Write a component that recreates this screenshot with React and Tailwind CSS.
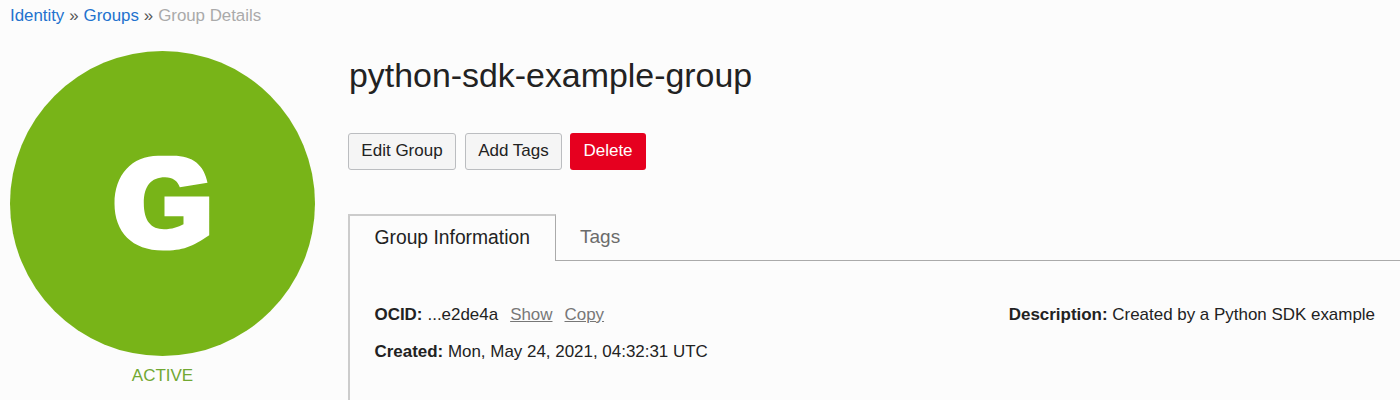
export default function App() {
  return (
    <div className="h-[400px] w-[1400px] overflow-hidden bg-[#fcfcfc] font-['Liberation_Sans',Arial,sans-serif] text-[#222]">
      <nav className="flex h-[51px] gap-[5px] pt-[6px] pl-[10px] text-[16.9px] leading-[20px] tracking-[-0.03px]">
        <a className="text-[#2272ce]">Identity</a>
        <span className="text-[#555]">»</span>
        <a className="text-[#2272ce]">Groups</a>
        <span className="text-[#555]">»</span>
        <span className="text-[#aaa]">Group Details</span>
      </nav>
      <div className="flex">
        <aside className="w-[348px] shrink-0 pl-[10px]">
          <div className="flex size-[305px] items-center justify-center rounded-full bg-[#78b418]">
            <svg className="overflow-visible" width="96" height="96" viewBox="0 0 96 96">
              <path d="M49.5 40.5H94.2V79.2C77 91 68 94.5 48 94.5C17 94.5 -0.5 76 -0.5 47.5C-0.5 19 17 -0.2 43 -0.2H58C78 -0.2 89 9 92.5 26.8L64.8 31.2C62.5 25 58 21.2 50 21.2C36 21.2 28.8 30 28.8 47C28.8 65 36 73.2 49 73.2C57 73.2 63 71 68.5 68.2V60.2H49.5Z" fill="white" />
            </svg>
          </div>
          <div className="w-[305px] pt-[10px] text-center text-[17px] leading-[20px] text-[#71a832]">ACTIVE</div>
        </aside>
        <main className="flex-1">
          <h1 className="h-[82px] pt-[4px] pl-px text-[33.9px] leading-[40px]">python-sdk-example-group</h1>
          <div className="flex h-[81px] items-start text-[17px] leading-[20px]">
            <button className="mr-[9px] h-[37px] w-[108px] rounded-[3px] border border-[#bbbdc0] bg-[#f5f5f5] pb-[2px]">Edit Group</button>
            <button className="mr-[8px] h-[37px] w-[97px] rounded-[3px] border border-[#bbbdc0] bg-[#f5f5f5] pb-[2px]">Add Tags</button>
            <button className="h-[37px] w-[76px] rounded-[3px] bg-[#e6001f] pb-[2px] text-white">Delete</button>
          </div>
          <div className="flex h-[47px] text-[19px]">
            <div className="flex w-[208px] items-center border-t-2 border-r border-l-2 border-t-[#ccc] border-r-[#aaa] border-l-[#ccc] pl-[24.5px] text-[19.3px]">Group Information</div>
            <div className="flex flex-1 items-center border-b border-[#aaa] pl-[24px] text-[#6b6b6b]">Tags</div>
          </div>
          <section className="flex h-[139px] justify-between border-l-2 border-[#ccc] pt-[44px] pr-[25px] pl-[24.5px] text-[16.95px] leading-[20px]">
            <div>
              <div className="flex h-[37px]"><b>OCID:</b><span className="ml-[5px]">...e2de4a</span><a className="ml-[12px] text-[#777] underline">Show</a><a className="ml-[12px] text-[#777] underline">Copy</a></div>
              <div><b>Created:</b> Mon, May 24, 2021, 04:32:31 UTC</div>
            </div>
            <div><b>Description:</b> Created by a Python SDK example</div>
          </section>
        </main>
      </div>
    </div>
  );
}
